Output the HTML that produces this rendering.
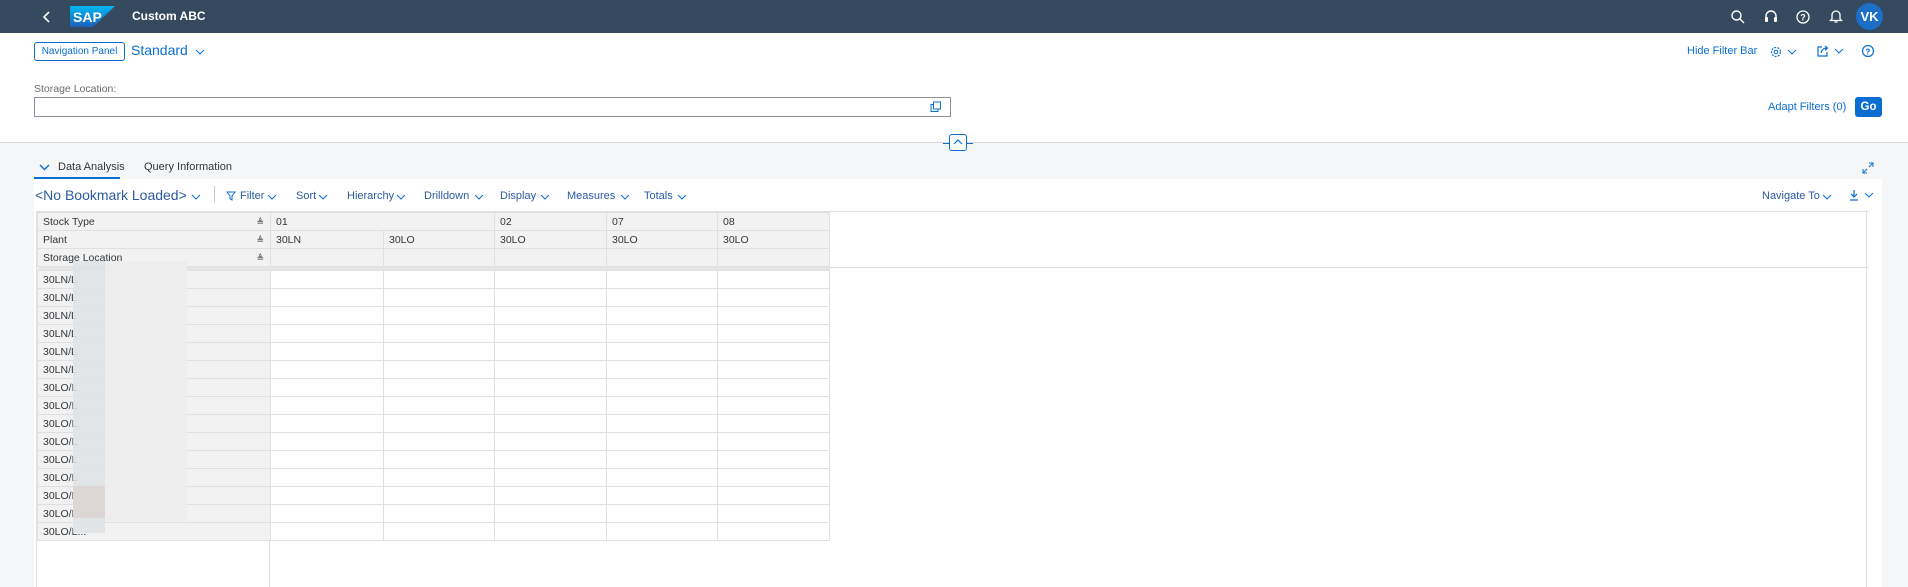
<!DOCTYPE html>
<html><head><meta charset="utf-8"><style>
*{box-sizing:border-box;margin:0;padding:0}
body{width:1908px;height:587px;overflow:hidden;background:#f5f6f7;font-family:"Liberation Sans",sans-serif;color:#32363a;position:relative}
.abs{position:absolute}
.hdr{left:0;top:0;width:1908px;height:33px;background:#354a5f}
.white{left:0;top:33px;width:1908px;height:110px;background:#fff;border-bottom:1px solid #d9d9d9}
.lnk{color:#0a6ed1;font-size:11.5px}
.tb{font-size:11px;color:#2b5a9e;top:190px}
table{position:absolute;left:37px;top:212px;border-collapse:collapse;table-layout:fixed;font-size:10.5px}
td{height:18px;border:1px solid #e0e0e0;padding:0 0 0 5px;white-space:nowrap;overflow:hidden;line-height:16px}
td.h{background:#f2f2f2}
td.d{background:#fff}
tr.sep td{height:4px;background:#e5e5e5;border:none;padding:0}
.s{float:right;margin-right:6px;font-size:9px}
</style></head><body>
<div class="abs hdr"></div>
<svg class="abs" style="left:42px;top:10px" width="10" height="14"><path d="M7 2 L2 7 L7 12" stroke="#fff" stroke-width="1.6" fill="none"/></svg>
<svg class="abs" style="left:70px;top:6px" width="45" height="21"><defs><linearGradient id="sapg" x1="0" y1="0" x2="0" y2="1"><stop offset="0" stop-color="#00b8f1"/><stop offset="1" stop-color="#1e5fbb"/></linearGradient></defs><path d="M0 0 H45 L23 21 H0Z" fill="url(#sapg)"/><text x="3" y="16" font-family="Liberation Sans" font-weight="bold" font-size="14" fill="#fff">SAP</text></svg>
<div class="abs" style="left:132px;top:9px;color:#fff;font-weight:bold;font-size:12px">Custom ABC</div>
<svg class="abs" style="left:1730px;top:9px" width="16" height="16"><circle cx="6.5" cy="6.5" r="4.5" stroke="#fff" stroke-width="1.4" fill="none"/><path d="M10 10 L14 14" stroke="#fff" stroke-width="1.5"/></svg>
<svg class="abs" style="left:1763px;top:9px" width="16" height="16"><path d="M3 10 V7 A5 5 0 0 1 13 7 V10" stroke="#fff" stroke-width="1.4" fill="none"/><rect x="2" y="8" width="3" height="5" rx="1" fill="#fff"/><rect x="11" y="8" width="3" height="5" rx="1" fill="#fff"/></svg>
<svg class="abs" style="left:1795px;top:9px" width="16" height="16"><circle cx="8" cy="8" r="6" stroke="#fff" stroke-width="1.3" fill="none"/><text x="5.2" y="11.5" font-size="9" font-family="Liberation Sans" font-weight="bold" fill="#fff">?</text></svg>
<svg class="abs" style="left:1828px;top:8px" width="16" height="17"><path d="M4 11 V7 A4 4 0 0 1 12 7 V11 L13.5 12.5 H2.5Z" stroke="#fff" stroke-width="1.3" fill="none"/><path d="M6.5 14 H9.5" stroke="#fff" stroke-width="1.3"/></svg>
<div class="abs" style="left:1856px;top:3px;width:27px;height:27px;border-radius:50%;background:#1c6ec6;color:#fff;font-weight:bold;font-size:13px;text-align:center;line-height:27px">VK</div>

<div class="abs white"></div>
<div class="abs" style="left:34px;top:42px;width:91px;height:19px;border:1px solid #0a6ed1;border-radius:3px;font-size:10px;color:#0a6ed1;text-align:center;line-height:17px">Navigation Panel</div>
<div class="abs" style="left:131px;top:42px;font-size:14px;color:#0a6ed1">Standard</div>
<svg class="abs" style="left:195px;top:48px" width="10" height="8"><path d="M1 2 L5 6 L9 2" stroke="#0a6ed1" fill="none"/></svg>
<div class="abs lnk" style="left:1687px;top:45px;font-size:11px">Hide Filter Bar</div>
<svg class="abs" style="left:1769px;top:45px" width="34" height="14"><circle cx="7" cy="7" r="4.5" stroke="#0a6ed1" stroke-width="1.2" fill="none" stroke-dasharray="2 1.2"/><circle cx="7" cy="7" r="1.8" stroke="#0a6ed1" fill="none"/><path d="M19 5 L23 9 L27 5" stroke="#0a6ed1" fill="none"/></svg>
<svg class="abs" style="left:1816px;top:44px" width="34" height="14"><path d="M6 3 H2 V12 H11 V8" stroke="#0a6ed1" stroke-width="1.2" fill="none"/><path d="M5 9 Q6 4 11 4 M9 2 L11.5 4 L9 6.5" stroke="#0a6ed1" stroke-width="1.2" fill="none"/><path d="M19 5 L23 9 L27 5" stroke="#0a6ed1" fill="none"/></svg>
<svg class="abs" style="left:1861px;top:44px" width="14" height="14"><circle cx="7" cy="7" r="5.5" stroke="#0a6ed1" stroke-width="1.2" fill="none"/><text x="4.3" y="10.5" font-size="8.5" font-family="Liberation Sans" font-weight="bold" fill="#0a6ed1">?</text></svg>

<div class="abs" style="left:34px;top:83px;font-size:10.5px;color:#6a6d70">Storage Location:</div>
<div class="abs" style="left:34px;top:97px;width:917px;height:20px;border:1px solid #89919a;background:#fff"></div>
<svg class="abs" style="left:930px;top:101px" width="12" height="12"><rect x="1" y="3.5" width="7" height="7" stroke="#0a6ed1" fill="none"/><rect x="3.5" y="1" width="7" height="7" stroke="#0a6ed1" fill="#fff"/></svg>
<div class="abs lnk" style="left:1768px;top:101px;font-size:11px">Adapt Filters (0)</div>
<div class="abs" style="left:1855px;top:97px;width:27px;height:20px;background:#0a6ed1;border-radius:3px;color:#fff;font-weight:bold;font-size:11.5px;text-align:center;line-height:20px">Go</div>

<div class="abs" style="left:943px;top:143px;width:30px;height:1px;background:#0a6ed1"></div>
<div class="abs" style="left:949px;top:134px;width:18px;height:17px;background:#fff;border:1px solid #0a6ed1;border-radius:3px"></div>
<svg class="abs" style="left:952px;top:138px" width="12" height="8"><path d="M2 6 L6 2 L10 6" stroke="#0a6ed1" fill="none" stroke-width="1.2"/></svg>

<svg class="abs" style="left:39px;top:163px" width="11" height="8"><path d="M1 2 L5.5 6.5 L10 2" stroke="#0a6ed1" stroke-width="1.4" fill="none"/></svg>
<div class="abs" style="left:58px;top:161px;font-size:11px;color:#32363a">Data Analysis</div>
<div class="abs" style="left:34px;top:177px;width:86px;height:2px;background:#0a6ed1"></div>
<div class="abs" style="left:144px;top:161px;font-size:11px;color:#32363a">Query Information</div>
<svg class="abs" style="left:1862px;top:162px" width="12" height="12"><path d="M7 1 H11 V5 M11 1 L7 5 M5 11 H1 V7 M1 11 L5 7" stroke="#0a6ed1" fill="none"/></svg>

<div class="abs" style="left:34px;top:179px;width:1848px;height:408px;background:#fff"></div>
<div class="abs" style="left:35px;top:187px;font-size:14px;color:#2b5a9e">&lt;No Bookmark Loaded&gt;</div>
<svg class="abs" style="left:191px;top:193px" width="10" height="8"><path d="M1 2 L5 6 L9 2" stroke="#0a6ed1" fill="none"/></svg>
<div class="abs" style="left:214px;top:186px;width:1px;height:17px;background:#ccc"></div>
<svg class="abs" style="left:226px;top:191px" width="10" height="10"><path d="M1 1 H9 L6 5 V9 L4 8 V5Z" stroke="#0a6ed1" fill="none"/></svg>
<div class="abs tb" style="left:240px">Filter</div>
<div class="abs tb" style="left:296px">Sort</div>
<div class="abs tb" style="left:347px">Hierarchy</div>
<div class="abs tb" style="left:424px">Drilldown</div>
<div class="abs tb" style="left:500px">Display</div>
<div class="abs tb" style="left:567px">Measures</div>
<div class="abs tb" style="left:644px">Totals</div>
<div class="abs tb" style="left:1762px">Navigate To</div>
<svg class="abs" style="left:0;top:193px" width="1908" height="8"><g stroke="#0a6ed1" fill="none"><path d="M268 2 L272 6 L276 2"/><path d="M319 2 L323 6 L327 2"/><path d="M397 2 L401 6 L405 2"/><path d="M475 2 L479 6 L483 2"/><path d="M541 2 L545 6 L549 2"/><path d="M621 2 L625 6 L629 2"/><path d="M678 2 L682 6 L686 2"/><path d="M1823 2 L1827 6 L1831 2"/></g></svg>
<svg class="abs" style="left:1849px;top:189px" width="34" height="12"><path d="M5 1 V8 M2 5 L5 8 L8 5 M1 11 H9" stroke="#0a6ed1" fill="none" stroke-width="1.2"/><path d="M16 4 L20 8 L24 4" stroke="#0a6ed1" fill="none"/></svg>

<div class="abs" style="left:36px;top:211px;width:1833px;height:1px;background:#e0e0e0"></div>
<div class="abs" style="left:36px;top:212px;width:1px;height:375px;background:#e0e0e0"></div>
<div class="abs" style="left:829px;top:267px;width:1040px;height:1px;background:#ddd"></div>
<div class="abs" style="left:1866px;top:212px;width:1px;height:375px;background:#e0e0e0"></div>
<div class="abs" style="left:269px;top:212px;width:1px;height:375px;background:#e0e0e0"></div>

<table>
<colgroup><col style="width:233px"><col style="width:113px"><col style="width:111px"><col style="width:112px"><col style="width:111px"><col style="width:112px"></colgroup>
<tr><td class="h">Stock Type<span class="s">≜</span></td><td class="h" colspan="2">01</td><td class="h">02</td><td class="h">07</td><td class="h">08</td></tr>
<tr><td class="h">Plant<span class="s">≜</span></td><td class="h">30LN</td><td class="h">30LO</td><td class="h">30LO</td><td class="h">30LO</td><td class="h">30LO</td></tr>
<tr><td class="h">Storage Location<span class="s">≜</span></td><td class="h"></td><td class="h"></td><td class="h"></td><td class="h"></td><td class="h"></td></tr>
<tr class="sep"><td colspan="6"></td></tr>
<tr><td class="h">30LN/L</td><td class="d"></td><td class="d"></td><td class="d"></td><td class="d"></td><td class="d"></td></tr>
<tr><td class="h">30LN/L</td><td class="d"></td><td class="d"></td><td class="d"></td><td class="d"></td><td class="d"></td></tr>
<tr><td class="h">30LN/L</td><td class="d"></td><td class="d"></td><td class="d"></td><td class="d"></td><td class="d"></td></tr>
<tr><td class="h">30LN/L</td><td class="d"></td><td class="d"></td><td class="d"></td><td class="d"></td><td class="d"></td></tr>
<tr><td class="h">30LN/L</td><td class="d"></td><td class="d"></td><td class="d"></td><td class="d"></td><td class="d"></td></tr>
<tr><td class="h">30LN/L</td><td class="d"></td><td class="d"></td><td class="d"></td><td class="d"></td><td class="d"></td></tr>
<tr><td class="h">30LO/L</td><td class="d"></td><td class="d"></td><td class="d"></td><td class="d"></td><td class="d"></td></tr>
<tr><td class="h">30LO/L</td><td class="d"></td><td class="d"></td><td class="d"></td><td class="d"></td><td class="d"></td></tr>
<tr><td class="h">30LO/L</td><td class="d"></td><td class="d"></td><td class="d"></td><td class="d"></td><td class="d"></td></tr>
<tr><td class="h">30LO/L</td><td class="d"></td><td class="d"></td><td class="d"></td><td class="d"></td><td class="d"></td></tr>
<tr><td class="h">30LO/L</td><td class="d"></td><td class="d"></td><td class="d"></td><td class="d"></td><td class="d"></td></tr>
<tr><td class="h">30LO/L</td><td class="d"></td><td class="d"></td><td class="d"></td><td class="d"></td><td class="d"></td></tr>
<tr><td class="h">30LO/L</td><td class="d"></td><td class="d"></td><td class="d"></td><td class="d"></td><td class="d"></td></tr>
<tr><td class="h">30LO/L</td><td class="d"></td><td class="d"></td><td class="d"></td><td class="d"></td><td class="d"></td></tr>
<tr><td class="h">30LO/L...</td><td class="d"></td><td class="d"></td><td class="d"></td><td class="d"></td><td class="d"></td></tr>
</table>
<div class="abs" style="left:73px;top:261px;width:32px;height:272px;background:#dfe3e6;opacity:.85"></div>
<div class="abs" style="left:105px;top:261px;width:82px;height:260px;background:#ededed;opacity:.9"></div>
<div class="abs" style="left:73px;top:486px;width:32px;height:32px;background:#dcd6d4"></div>
</body></html>
